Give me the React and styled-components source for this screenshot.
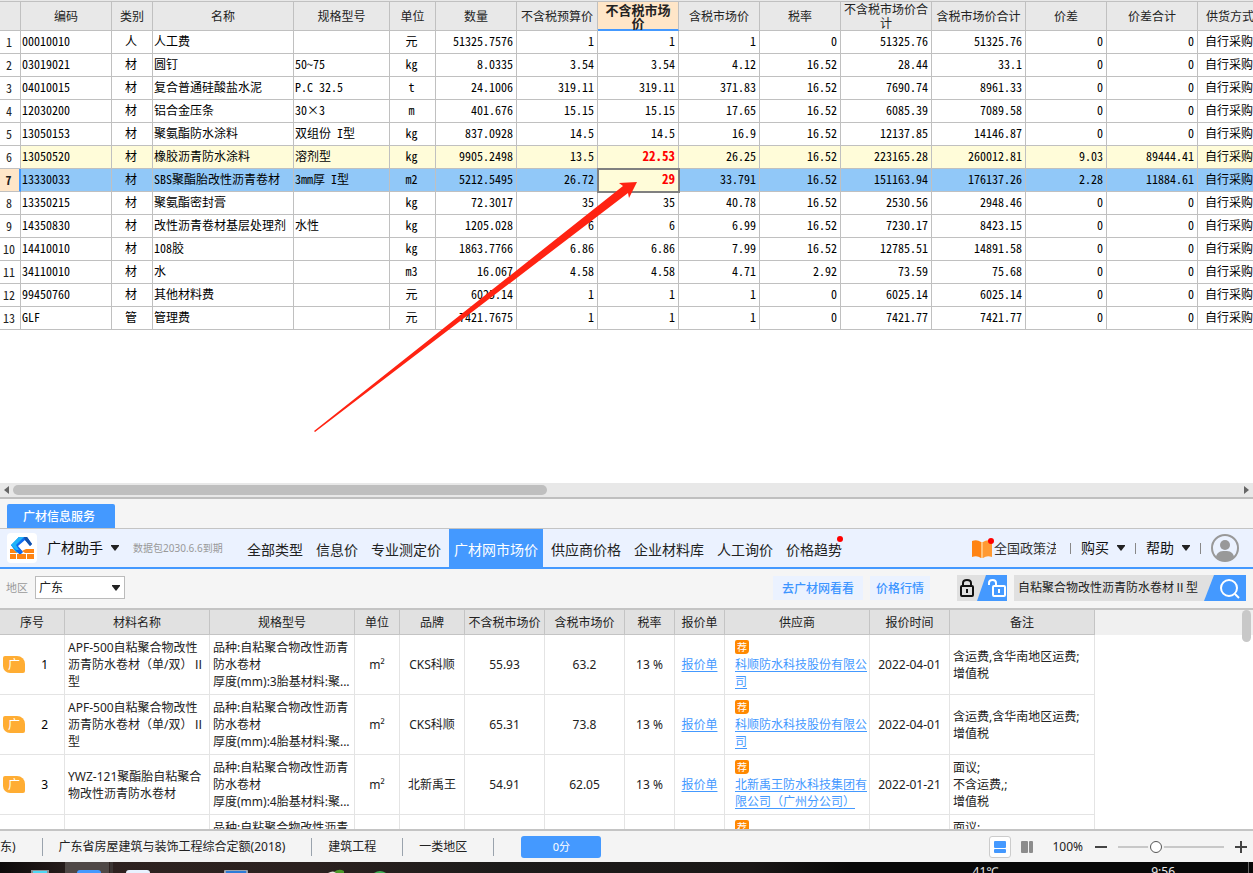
import React, { useState } from "react";
import styled, { createGlobalStyle, css } from "styled-components";

const GlobalStyle = createGlobalStyle`
  * {
    box-sizing: border-box;
  }

  body {
    margin: 0;
    background: #fff;
    color: #222;
    font-family: "Noto Sans", "Noto Sans CJK SC", sans-serif;
    font-size: 12px;
    line-height: 17px;
  }

  button,
  input,
  select {
    font: inherit;
    color: inherit;
    margin: 0;
    padding: 0;
    border: 0;
    border-radius: 0;
    background: none;
  }
`;

const Page = styled.div`
  height: 100vh;
  display: flex;
  flex-direction: column;
  overflow: hidden;
`;

/* ---------- cost grid ---------- */

const GridPane = styled.section`
  position: relative;
  flex: 1;
  min-height: 0;
  overflow: hidden;
  border-top: 1px solid #e8e8e8;
`;

const CostTable = styled.table`
  table-layout: fixed;
  width: 1263px;
  border-spacing: 0;
  border-top: 1px solid #c0c0c0;
  color: #000;
  font-family: "Noto Sans CJK SC", sans-serif;
  font-feature-settings: "hwid";
  line-height: 14px;
`;

const CostHead = styled.th`
  height: 29px;
  padding: 0;
  background: #e8e8e8;
  border-right: 1px solid #c0c0c0;
  border-bottom: 1px solid #c0c0c0;
  color: #222;
  font-weight: 400;
  ${(props) =>
    props.$active &&
    css`
      padding: 0 4px;
      background: #ffe6c8;
      border-bottom: 2px solid #4499ff;
      font-size: 13px;
      font-weight: 700;
      line-height: 13px;
    `}
`;

const CostRow = styled.tr`
  background: ${(props) => props.$tone || "#fff"};
`;

const CostCell = styled.td`
  height: 23px;
  padding: 0 3px 2px 1px;
  border-right: 1px solid #c0c0c0;
  border-bottom: 1px solid #c0c0c0;
  text-align: ${(props) => props.$align};
  white-space: nowrap;
  ${(props) =>
    props.$changed &&
    css`
      color: #f00;
      font-size: 13px;
      font-weight: 700;
    `}
  ${(props) =>
    props.$focused &&
    css`
      position: relative;
      background: #fffcd9;
      outline: 2px solid #808080;
      outline-offset: -1px;
    `}
`;

const RowNumber = styled.th`
  padding: 0 2px 0 0;
  background: ${(props) => (props.$active ? "#ffe6c8" : "#fff")};
  border-right: ${(props) =>
    props.$active ? "2px solid #4499ff" : "1px solid #c0c0c0"};
  border-bottom: 1px solid #c0c0c0;
  color: #222;
  font-weight: ${(props) => (props.$active ? 700 : 400)};
`;

const Pointer = styled.svg`
  position: absolute;
  left: 0;
  top: 0;
  pointer-events: none;
`;

const ScrollBar = styled.div`
  display: flex;
  align-items: center;
  gap: 4px;
  height: 16px;
  padding: 0 4px;
  background: #e8e8e8;
  border-bottom: 2px solid #bfbfbf;
`;

const ScrollTrack = styled.div`
  flex: 1;
  height: 10px;
`;

const ScrollThumb = styled.div`
  width: 43.5%;
  height: 10px;
  border-radius: 5px;
  background: #bfbfbf;
`;

const columns = [
  { title: "编码", width: 91, align: "left" },
  { title: "类别", width: 41, align: "center" },
  { title: "名称", width: 141, align: "left" },
  { title: "规格型号", width: 96, align: "left" },
  { title: "单位", width: 46, align: "center" },
  { title: "数量", width: 81, align: "right" },
  { title: "不含税预算价", width: 81, align: "right" },
  { title: "不含税市场价", width: 81, align: "right" },
  { title: "含税市场价", width: 81, align: "right" },
  { title: "税率", width: 81, align: "right" },
  { title: "不含税市场价合计", width: 91, align: "right" },
  { title: "含税市场价合计", width: 94, align: "right" },
  { title: "价差", width: 81, align: "right" },
  { title: "价差合计", width: 91, align: "right" },
  { title: "供货方式", width: 65, align: "center" },
];

const PRICE_COLUMN = 7;
const SELECTED_ROW = 6;

const costs = [
  ["00010010", "人", "人工费", "", "元", "51325.7576", "1", "1", "1", "0", "51325.76", "51325.76", "0", "0"],
  ["03019021", "材", "圆钉", "50~75", "kg", "8.0335", "3.54", "3.54", "4.12", "16.52", "28.44", "33.1", "0", "0"],
  ["04010015", "材", "复合普通硅酸盐水泥", "P.C 32.5", "t", "24.1006", "319.11", "319.11", "371.83", "16.52", "7690.74", "8961.33", "0", "0"],
  ["12030200", "材", "铝合金压条", "30×3", "m", "401.676", "15.15", "15.15", "17.65", "16.52", "6085.39", "7089.58", "0", "0"],
  ["13050153", "材", "聚氨酯防水涂料", "双组份 I型", "kg", "837.0928", "14.5", "14.5", "16.9", "16.52", "12137.85", "14146.87", "0", "0"],
  ["13050520", "材", "橡胶沥青防水涂料", "溶剂型", "kg", "9905.2498", "13.5", "22.53", "26.25", "16.52", "223165.28", "260012.81", "9.03", "89444.41"],
  ["13330033", "材", "SBS聚酯胎改性沥青卷材", "3mm厚 I型", "m2", "5212.5495", "26.72", "29", "33.791", "16.52", "151163.94", "176137.26", "2.28", "11884.61"],
  ["13350215", "材", "聚氨酯密封膏", "", "kg", "72.3017", "35", "35", "40.78", "16.52", "2530.56", "2948.46", "0", "0"],
  ["14350830", "材", "改性沥青卷材基层处理剂", "水性", "kg", "1205.028", "6", "6", "6.99", "16.52", "7230.17", "8423.15", "0", "0"],
  ["14410010", "材", "108胶", "", "kg", "1863.7766", "6.86", "6.86", "7.99", "16.52", "12785.51", "14891.58", "0", "0"],
  ["34110010", "材", "水", "", "m3", "16.067", "4.58", "4.58", "4.71", "2.92", "73.59", "75.68", "0", "0"],
  ["99450760", "材", "其他材料费", "", "元", "6025.14", "1", "1", "1", "0", "6025.14", "6025.14", "0", "0"],
  ["GLF", "管", "管理费", "", "元", "7421.7675", "1", "1", "1", "0", "7421.77", "7421.77", "0", "0"],
];

const rowTone = (index, changed) => {
  if (index === SELECTED_ROW) return "#91c8f8";
  return changed ? "#fffcd9" : "#fff";
};

const CostGrid = () => (
  <GridPane>
    <CostTable>
      <colgroup>
        <col width="21" />
        {columns.map((column) => (
          <col key={column.title} width={column.width} />
        ))}
      </colgroup>
      <thead>
        <tr>
          <CostHead />
          {columns.map((column, i) => (
            <CostHead key={column.title} $active={i === PRICE_COLUMN}>
              {column.title}
            </CostHead>
          ))}
        </tr>
      </thead>
      <tbody>
        {costs.map((row, index) => {
          const changed = row[12] !== "0";
          return (
            <CostRow key={row[0]} $tone={rowTone(index, changed)}>
              <RowNumber $active={index === SELECTED_ROW}>{index + 1}</RowNumber>
              {[...row, "自行采购"].map((value, i) => (
                <CostCell
                  key={columns[i].title}
                  $align={columns[i].align}
                  $changed={changed && i === PRICE_COLUMN}
                  $focused={index === SELECTED_ROW && i === PRICE_COLUMN}
                >
                  {value}
                </CostCell>
              ))}
            </CostRow>
          );
        })}
      </tbody>
    </CostTable>
    <Pointer width="660" height="440" aria-hidden="true">
      <path
        d="M314 430L623 185L619 182L637 181L629 197L628 192L315 431Z"
        fill="#ff2312"
      />
    </Pointer>
  </GridPane>
);

/* ---------- material service ---------- */

const ServiceTabs = styled.div`
  display: flex;
  align-items: flex-end;
  height: 30px;
  padding-left: 7px;
  background: #f5f5f5;
  border-bottom: 1px solid #c4c4c4;
`;

const ServiceTab = styled.button`
  width: 108px;
  height: 24px;
  padding-right: 4px;
  border-radius: 2px 2px 0 0;
  background: #4499ff;
  color: #fff;
  font-weight: 500;
`;

const NavBar = styled.header`
  display: flex;
  align-items: center;
  height: 40px;
  padding: 0 14px 0 7px;
  background: #ebf2ff;
  border-bottom: 2px solid #4499ff;
  color: #111;
  font-size: 14px;
  line-height: 20px;
  white-space: nowrap;
`;

const MenuButton = styled.button`
  display: flex;
  align-items: center;
  gap: 8px;
`;

const Logo = styled.svg`
  flex: none;
  margin-right: 10px;
`;

const Expiry = styled.span`
  width: 109px;
  margin-left: 14px;
  color: #999;
  font-size: 10px;
`;

const NavTabs = styled.nav`
  display: flex;
  gap: 3px;
  height: 38px;
`;

const NavTab = styled.button`
  position: relative;
  padding: 4px 5px 0;
  background: ${(props) => (props.$active ? "#4499ff" : "none")};
  color: ${(props) => (props.$active ? "#fff" : "#222")};
`;

const RedDot = styled.i`
  position: absolute;
  top: ${(props) => props.$top}px;
  right: ${(props) => props.$right}px;
  width: 6px;
  height: 6px;
  border-radius: 3px;
  background: #f00;
`;

const NavRight = styled.div`
  display: flex;
  align-items: center;
  gap: 10px;
  margin-left: auto;
`;

const Policy = styled.a`
  position: relative;
  display: flex;
  align-items: center;
  gap: 2px;
  width: 84px;
  margin-right: 4px;
  overflow: hidden;
  color: #333;
  font-size: 13px;
  text-decoration: none;
`;

const PolicyIcon = styled.svg`
  flex: none;
`;

const Divider = styled.span`
  width: 1px;
  height: 11px;
  background: #888;
`;

const FilterBar = styled.div`
  display: flex;
  align-items: center;
  height: 41px;
  padding: 0 7px 2px 6px;
  background: #f5f5f5;
  border-bottom: 2px solid #c4c4c4;
`;

const AreaLabel = styled.label`
  margin-right: 7px;
  color: #999;
  font-size: 11px;
`;

const SelectBox = styled.div`
  position: relative;
  display: flex;
  align-items: center;
`;

const AreaSelect = styled.select`
  width: 90px;
  height: 23px;
  padding: 0 3px;
  appearance: none;
  background: #fff;
  border: 1px solid #bbb;
`;

const SelectCaret = styled.span`
  position: absolute;
  right: 5px;
  display: flex;
  pointer-events: none;
`;

const SiteLinks = styled.div`
  display: flex;
  gap: 7px;
  margin-left: auto;
`;

const SiteLink = styled.a`
  padding: 4px ${(props) => (props.$wide ? 9 : 6)}px 3px;
  background: #ebf2ff;
  color: #3d95ff;
  font-weight: 500;
  text-decoration: none;
`;

const LockSwitch = styled.button`
  width: 50px;
  height: 26px;
  margin: 0 7px 0 27px;
  display: flex;
`;

const SearchBox = styled.form`
  display: flex;
  height: 26px;
  background: #e0e0e0;
`;

const SearchInput = styled.input`
  width: 190px;
  padding-left: 4px;
`;

const SearchButton = styled.button`
  display: flex;
`;

const MarketPane = styled.div`
  display: flex;
  height: 221px;
  overflow: hidden;
  background: #fff;
  border-bottom: 2px solid #c4c4c4;
`;

const MarketTable = styled.table`
  flex: none;
  table-layout: fixed;
  width: 1095px;
  border-spacing: 0;
`;

const MarketHead = styled.th`
  height: 25px;
  padding: 0;
  background: #e1e1e1;
  border-right: 1px solid #c4c4c4;
  border-bottom: 1px solid #c4c4c4;
  font-weight: 400;
`;

const MarketCell = styled.td`
  height: 60px;
  padding: 0 ${(props) => (props.$left ? 3 : 0)}px;
  border-right: 1px solid #e4e4e4;
  border-bottom: 1px solid #e4e4e4;
  text-align: ${(props) => (props.$left ? "left" : "center")};
  white-space: pre-line;
`;

const IndexCell = styled.div`
  display: flex;
  align-items: center;
  justify-content: space-between;
  padding: 0 16px 0 3px;
  color: #000;
`;

const AdBadge = styled.span`
  width: 22px;
  height: 17px;
  border-radius: 2px 8px 2px 7px;
  background: #ffad33;
  color: #fff;
`;

const Spec = styled.div`
  white-space: pre;
  overflow: hidden;
`;

const BlueLink = styled.a`
  color: #4499ff;
  text-underline-offset: 2px;
`;

const Supplier = styled.div`
  padding-left: 7px;
  margin-right: -3px;
`;

const PromoBadge = styled.span`
  display: block;
  width: 14px;
  height: 14px;
  margin-bottom: 2px;
  border-radius: 2px 2px 4px 2px;
  background: #ff8800;
  color: #fff;
  font-size: 10px;
  line-height: 14px;
  text-align: center;
`;

const ListGutter = styled.div`
  flex: 1;
  display: flex;
  justify-content: flex-end;
  height: 25px;
  padding-right: 2px;
  background: #f0f0f0;
`;

const ListThumb = styled.div`
  width: 9px;
  height: 32px;
  border-radius: 5px;
  background: #c8c8c8;
`;

const marketColumns = [
  ["序号", 65],
  ["材料名称", 145],
  ["规格型号", 145],
  ["单位", 45],
  ["品牌", 65],
  ["不含税市场价", 80],
  ["含税市场价", 80],
  ["税率", 50],
  ["报价单", 50],
  ["供应商", 145],
  ["报价时间", 80],
  ["备注", 145],
];

const offers = [
  {
    name: "APF-500自粘聚合物改性沥青防水卷材（单/双）Ⅱ型",
    spec: "品种:自粘聚合物改性沥青\n防水卷材\n厚度(mm):3胎基材料:聚...",
    brand: "CKS科顺",
    net: "55.93",
    gross: "63.2",
    supplier: "科顺防水科技股份有限公司",
    date: "2022-04-01",
    note: "含运费,含华南地区运费;\n增值税",
  },
  {
    name: "APF-500自粘聚合物改性沥青防水卷材（单/双）Ⅱ型",
    spec: "品种:自粘聚合物改性沥青\n防水卷材\n厚度(mm):4胎基材料:聚...",
    brand: "CKS科顺",
    net: "65.31",
    gross: "73.8",
    supplier: "科顺防水科技股份有限公司",
    date: "2022-04-01",
    note: "含运费,含华南地区运费;\n增值税",
  },
  {
    name: "YWZ-121聚酯胎自粘聚合物改性沥青防水卷材",
    spec: "品种:自粘聚合物改性沥青\n防水卷材\n厚度(mm):4胎基材料:聚...",
    brand: "北新禹王",
    net: "54.91",
    gross: "62.05",
    supplier: "北新禹王防水科技集团有限公司（广州分公司）",
    date: "2022-01-21",
    note: "面议;\n不含运费,;\n增值税",
  },
];

const navItems = [
  "全部类型",
  "信息价",
  "专业测定价",
  "广材网市场价",
  "供应商价格",
  "企业材料库",
  "人工询价",
  "价格趋势",
];

const Caret = () => (
  <svg width="8" height="6" viewBox="0 0 8 6">
    <path d="M0 0H8V1L4 6L0 1Z" fill="#222" />
  </svg>
);

const AssistantLogo = () => (
  <Logo width="30" height="30" viewBox="0 0 30 30">
    <rect width="30" height="30" rx="4" fill="#fff" />
    <path d="M12 4H18L10 12L14 19L9 20L4 12Z" fill="#1ba9f5" />
    <path d="M4 12H9L16 19L13 22Z" fill="#0a62f0" />
    <path d="M12 4H20L25 11L23 13L18 7L11 13L16 19L12 20L5 12Z" fill="#0f6cf0" />
    <path d="M12 4H17L9 12L12 17L9 17L4 12Z" fill="#22b4f8" />
    <path d="M17 4H20L25 11L23 13L18 7Z" fill="#1450a8" />
    <path
      d="M3 16H6L10 20H3ZM19 16H27V20H18L15 18ZM3 21H9V26H3ZM10 21H19V26H10ZM20 21H27V26H20Z"
      fill="#ff8413"
    />
  </Logo>
);

const NavigationBar = () => {
  const [tab, setTab] = useState("广材网市场价");

  return (
    <NavBar>
      <AssistantLogo />
      <MenuButton>
        广材助手
        <Caret />
      </MenuButton>
      <Expiry>数据包2030.6.6到期</Expiry>
      <NavTabs>
        {navItems.map((item) => (
          <NavTab key={item} $active={item === tab} onClick={() => setTab(item)}>
            {item}
            {item === "价格趋势" && <RedDot $top={7} $right={4} />}
          </NavTab>
        ))}
      </NavTabs>
      <NavRight>
        <Policy href="#policy">
          <PolicyIcon width="20" height="19" viewBox="0 0 20 19">
            <path d="M0 2Q5 0 9 3V19Q5 16 0 18Z" fill="#ff8413" />
            <path d="M11 3Q15 0 20 2V18Q15 16 11 19Z" fill="#ff9a33" />
            <path d="M9 3H11V19H9Z" fill="#ffc27a" />
          </PolicyIcon>
          全国政策法规
          <RedDot $top={0} $right={62} />
        </Policy>
        <Divider />
        <MenuButton>
          购买
          <Caret />
        </MenuButton>
        <Divider />
        <MenuButton>
          帮助
          <Caret />
        </MenuButton>
        <Divider />
        <svg width="28" height="28" viewBox="0 0 28 28">
          <circle cx="14" cy="14" r="13" fill="#ebf2ff" stroke="#999" strokeWidth="2" />
          <circle cx="14" cy="11" r="5" fill="#999" />
          <path d="M5 23C6 18 9 17 14 17S22 18 23 23Q14 31 5 23Z" fill="#999" />
        </svg>
      </NavRight>
    </NavBar>
  );
};

const MaterialFilter = () => {
  const [keyword, setKeyword] = useState("自粘聚合物改性沥青防水卷材Ⅱ型");

  return (
    <FilterBar>
      <AreaLabel htmlFor="area">地区</AreaLabel>
      <SelectBox>
        <AreaSelect id="area" defaultValue="广东">
          <option>广东</option>
        </AreaSelect>
        <SelectCaret>
          <Caret />
        </SelectCaret>
      </SelectBox>
      <SiteLinks>
        <SiteLink href="#site" $wide>
          去广材网看看
        </SiteLink>
        <SiteLink href="#trend">价格行情</SiteLink>
      </SiteLinks>
      <LockSwitch aria-label="锁定">
        <svg width="50" height="26" viewBox="0 0 50 26">
          <path d="M0 0H50V26H0Z" fill="#e0e0e0" />
          <path d="M29 0H50V26H20Z" fill="#4499ff" />
          <g fill="none" stroke="#111" strokeWidth="2">
            <rect x="4" y="11" width="12" height="10" rx="1" />
            <path d="M6 11V8Q6 5 10 5T14 8V11M10 14V18" />
          </g>
          <g fill="none" stroke="#fff" strokeWidth="2">
            <rect x="36" y="11" width="12" height="10" rx="1" />
            <path d="M32 10V8Q32 5 35.500 5T39 8V11M42 14V18" />
          </g>
        </svg>
      </LockSwitch>
      <SearchBox onSubmit={(e) => e.preventDefault()}>
        <SearchInput
          aria-label="搜索材料"
          value={keyword}
          onChange={(e) => setKeyword(e.target.value)}
        />
        <SearchButton aria-label="搜索">
          <svg width="42" height="26" viewBox="0 0 42 26">
            <path d="M10 0H42V26H0Z" fill="#4499ff" />
            <g fill="none" stroke="#fff" strokeWidth="2">
              <circle cx="25" cy="13" r="8" />
              <path d="M31 19L35 23" />
            </g>
          </svg>
        </SearchButton>
      </SearchBox>
    </FilterBar>
  );
};

const MarketList = () => (
  <MarketPane>
    <MarketTable>
      <colgroup>
        {marketColumns.map(([title, width]) => (
          <col key={title} width={width} />
        ))}
      </colgroup>
      <thead>
        <tr>
          {marketColumns.map(([title]) => (
            <MarketHead key={title}>{title}</MarketHead>
          ))}
        </tr>
      </thead>
      <tbody>
        {offers.map((offer, i) => (
          <tr key={i}>
            <MarketCell>
              <IndexCell>
                <AdBadge>广</AdBadge>
                {i + 1}
              </IndexCell>
            </MarketCell>
            <MarketCell $left>{offer.name}</MarketCell>
            <MarketCell $left>
              <Spec>{offer.spec}</Spec>
            </MarketCell>
            <MarketCell>m²</MarketCell>
            <MarketCell>{offer.brand}</MarketCell>
            <MarketCell>{offer.net}</MarketCell>
            <MarketCell>{offer.gross}</MarketCell>
            <MarketCell>13 %</MarketCell>
            <MarketCell>
              <BlueLink href="#quote">报价单</BlueLink>
            </MarketCell>
            <MarketCell $left>
              <Supplier>
                <PromoBadge>荐</PromoBadge>
                <BlueLink href="#supplier">{offer.supplier}</BlueLink>
              </Supplier>
            </MarketCell>
            <MarketCell>{offer.date}</MarketCell>
            <MarketCell $left>{offer.note}</MarketCell>
          </tr>
        ))}
        <tr>
          <MarketCell />
          <MarketCell />
          <MarketCell $left>
            <Spec>{offers[2].spec}</Spec>
          </MarketCell>
          <MarketCell />
          <MarketCell />
          <MarketCell />
          <MarketCell />
          <MarketCell />
          <MarketCell />
          <MarketCell $left>
            <Supplier>
              <PromoBadge>荐</PromoBadge>
              <BlueLink href="#supplier">{offers[2].supplier}</BlueLink>
            </Supplier>
          </MarketCell>
          <MarketCell />
          <MarketCell $left>{offers[2].note}</MarketCell>
        </tr>
      </tbody>
    </MarketTable>
    <ListGutter>
      <ListThumb />
    </ListGutter>
  </MarketPane>
);

/* ---------- status bar and taskbar ---------- */

const StatusBar = styled.footer`
  display: flex;
  align-items: center;
  height: 31px;
  padding-right: 6px;
  background: #f4f4f4;
  white-space: nowrap;
`;

const StatusItem = styled.span`
  display: flex;
  align-items: center;
  height: 18px;
  padding: 0 26px 0 16px;
  border-right: 1px solid #9aa3ad;

  &:first-child {
    padding-left: 0;
  }
`;

const ScoreButton = styled.button`
  width: 80px;
  height: 22px;
  margin-left: 27px;
  border-radius: 3px;
  background: #4499ff;
  color: #fff;
  font-size: 11px;
`;

const ViewTools = styled.div`
  display: flex;
  align-items: center;
  margin-left: auto;
`;

const ViewButton = styled.button`
  display: flex;
  align-items: center;
  justify-content: center;
  width: 22px;
  height: 22px;
  border: 1px solid ${(props) => (props.$active ? "#ccc" : "transparent")};
  border-radius: 3px;
  background: ${(props) => (props.$active ? "#fff" : "none")};
  color: ${(props) => (props.$active ? "#4499ff" : "#8c8c8c")};

  & + & {
    margin-left: 5px;
  }
`;

const ZoomValue = styled.label`
  margin: 0 12px 0 14px;
`;

const ZoomButton = styled.button`
  display: flex;
  color: #444;
`;

const ZoomSlider = styled.input`
  width: 106px;
  height: 14px;
  margin: 0 11px;
  appearance: none;
  background: linear-gradient(#c8c8c8, #c8c8c8) center / 100% 2px no-repeat;

  &::-webkit-slider-thumb {
    appearance: none;
    width: 12px;
    height: 12px;
    border: 1px solid #555;
    border-radius: 6px;
    background: #fff;
    box-shadow: 0 0 0 2px #f4f4f4;
  }
`;

const Taskbar = styled.div`
  position: relative;
  display: flex;
  justify-content: flex-end;
  height: 11px;
  padding-right: 4px;
  overflow: hidden;
  background: linear-gradient(
    90deg,
    #0c0a0a,
    #2e2220 7%,
    #2b211f 25%,
    #1c1b1a 40%,
    #1a1716 60%,
    #080808 68%
  );
  color: #e8e8e8;
`;

const TaskIcons = styled.svg`
  position: absolute;
  left: 0;
  top: 0;
`;

const TaskText = styled.span`
  padding-top: 1px;
  margin-right: ${(props) => props.$gap}px;
`;

const TaskEdge = styled.span`
  width: 1px;
  background: #666;
`;

const Status = () => (
  <StatusBar>
    <StatusItem>东)</StatusItem>
    <StatusItem>广东省房屋建筑与装饰工程综合定额(2018)</StatusItem>
    <StatusItem>建筑工程</StatusItem>
    <StatusItem>一类地区</StatusItem>
    <ScoreButton>0分</ScoreButton>
    <ViewTools>
      <ViewButton $active aria-label="上下布局">
        <svg width="12" height="12" fill="currentColor">
          <rect width="12" height="7" rx="1" />
          <rect y="8" width="12" height="4" rx="1" />
        </svg>
      </ViewButton>
      <ViewButton aria-label="左右布局">
        <svg width="12" height="12" fill="currentColor">
          <rect width="7" height="12" rx="1" />
          <rect x="8" width="4" height="12" rx="1" />
        </svg>
      </ViewButton>
      <ZoomValue htmlFor="zoom">100%</ZoomValue>
      <ZoomButton aria-label="缩小">
        <svg width="12" height="12" fill="currentColor">
          <rect y="5" width="12" height="2" />
        </svg>
      </ZoomButton>
      <ZoomSlider id="zoom" type="range" min="0" max="300" defaultValue="102" />
      <ZoomButton aria-label="放大">
        <svg width="12" height="12" fill="currentColor">
          <rect y="5" width="12" height="2" />
          <rect x="5" width="2" height="12" />
        </svg>
      </ZoomButton>
    </ViewTools>
  </StatusBar>
);

const SystemTaskbar = () => (
  <Taskbar>
    <TaskIcons width="400" height="11" aria-hidden="true">
      <rect x="65" width="44" height="11" fill="#4f4846" />
      <rect x="110" width="3" height="11" fill="#3c3533" />
      <rect x="31" y="8" width="18" height="4" fill="#8a9096" />
      <rect x="33" y="9" width="14" height="2" fill="#4fd8f5" />
      <rect x="77" y="8" width="24" height="8" rx="3" fill="#4499ff" />
      <rect x="126" y="8" width="24" height="8" rx="3" fill="#e8f2ff" />
      <rect x="224" y="8" width="24" height="4" rx="1" fill="#9aa3b0" />
      <rect x="226" y="9" width="20" height="2" fill="#2d7bd8" />
      <path d="M328 11Q333 8 337 11Z" fill="#e8e8e0" />
      <path d="M334 10Q339 6 344 9V11H337Z" fill="#4c9a2a" />
      <path d="M374 11Q380 7 386 11Z" fill="#3fae55" />
    </TaskIcons>
    <TaskText $gap={153}>41℃</TaskText>
    <TaskText $gap={73}>9:56</TaskText>
    <TaskEdge />
  </Taskbar>
);

const App = () => (
  <>
    <GlobalStyle />
    <Page>
      <CostGrid />
      <ScrollBar>
        <svg width="5" height="8">
          <path d="M5 0V8L0 4Z" fill="#666" />
        </svg>
        <ScrollTrack>
          <ScrollThumb />
        </ScrollTrack>
        <svg width="5" height="8">
          <path d="M0 0V8L5 4Z" fill="#666" />
        </svg>
      </ScrollBar>
      <ServiceTabs>
        <ServiceTab>广材信息服务</ServiceTab>
      </ServiceTabs>
      <NavigationBar />
      <MaterialFilter />
      <MarketList />
      <Status />
      <SystemTaskbar />
    </Page>
  </>
);

export default App;
